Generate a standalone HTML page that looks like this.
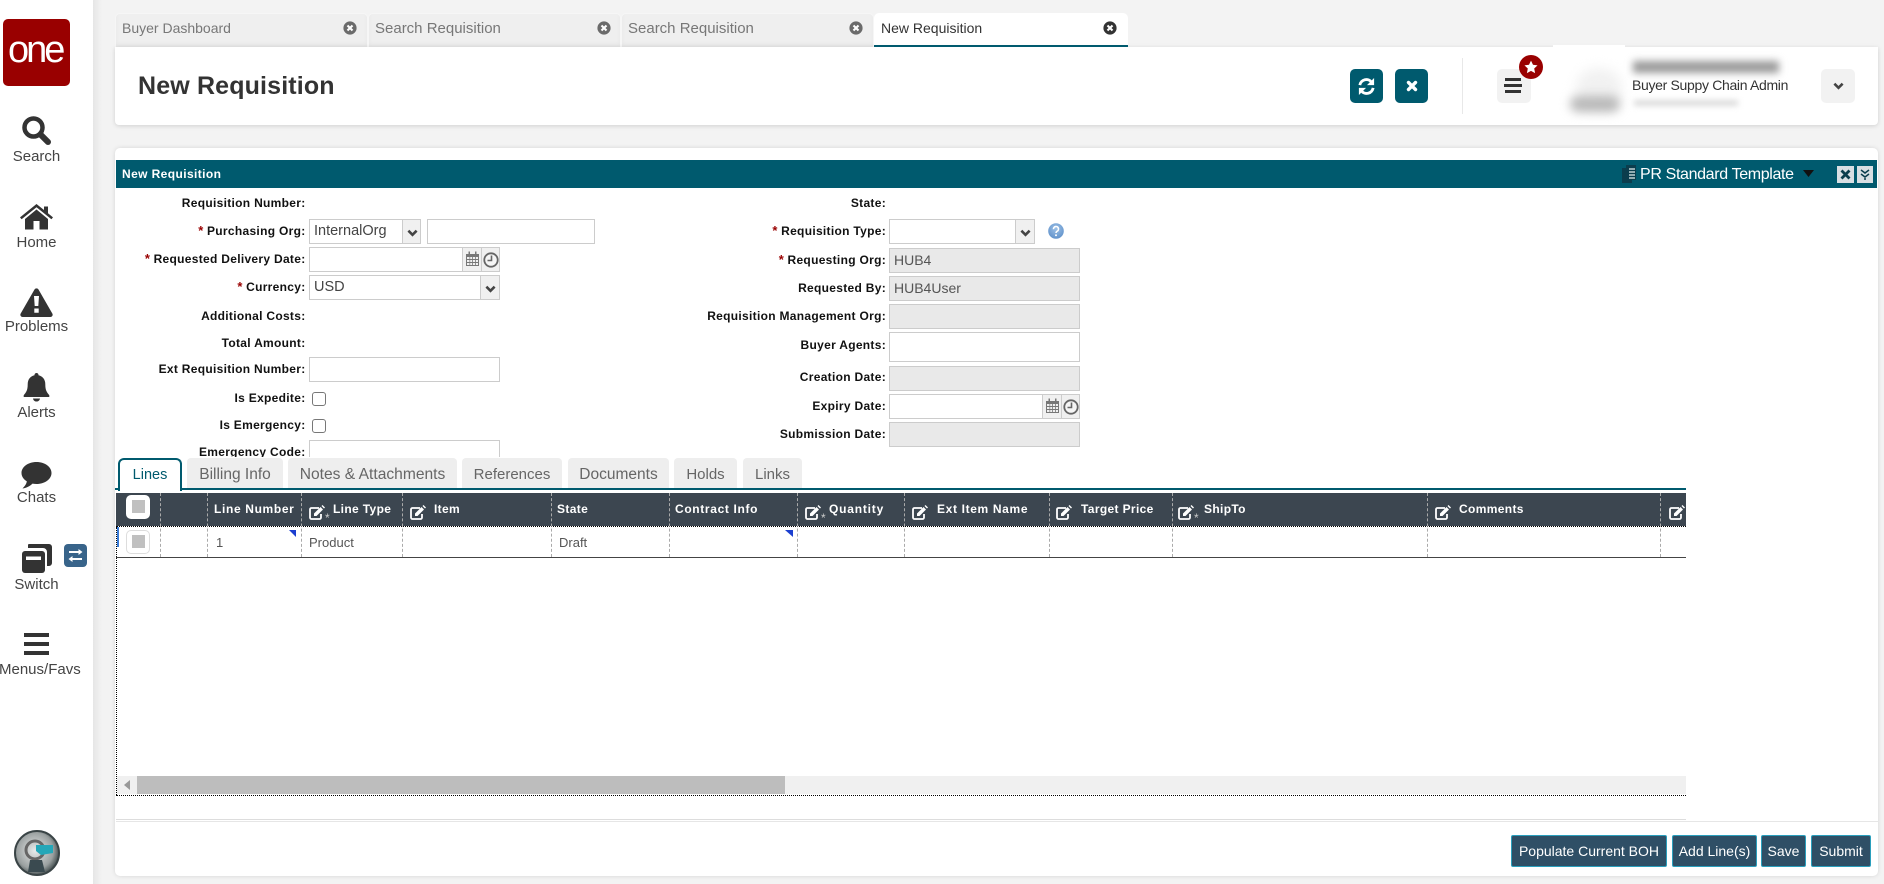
<!DOCTYPE html>
<html lang="en">
<head>
<meta charset="utf-8">
<title>New Requisition</title>
<style>
html,body{margin:0;padding:0;width:1884px;height:884px;overflow:hidden;background:#f3f3f3;font-family:"Liberation Sans",sans-serif}
div,span,svg{position:absolute;box-sizing:border-box}
.t{white-space:nowrap}
.side{left:0;width:73px;text-align:center;font-size:15px;line-height:18px;color:#444;white-space:nowrap}
.lab{font-weight:bold;font-size:12px;line-height:16px;color:#111;letter-spacing:.3px;text-align:right;white-space:nowrap}
.lc{left:100px;width:205.5px}
.rc{left:500px;width:386px}
.lab b{color:#900;font-size:13px;letter-spacing:0}
.b{background:#fff;border:1px solid #ccc}
.g{background:#e9e9e9;border:1px solid #ccc;font-size:14px;line-height:23px;color:#555;padding-left:4px}
.bt{background:#f0f0f0;border-left:1px solid #ccc;top:0;bottom:0}
.val{font-size:14.5px;line-height:23px;color:#444;left:4px;top:0}
.tab{top:13px;height:34px;background:#efefef;border:1px solid #f6f6f6;border-bottom:0;border-radius:5px 5px 0 0;box-shadow:0 -3px 4px rgba(0,0,0,.04) inset}
.tt{top:18px;font-size:14px;line-height:20px;color:#777;white-space:nowrap}
.ct{top:458px;height:30px;background:#eee;border-radius:4px 4px 0 0;font-size:15px;line-height:34px;color:#666;text-align:center;white-space:nowrap}
.hd{top:501px;font-weight:bold;font-size:12px;line-height:16px;color:#fff;letter-spacing:.35px;white-space:nowrap}
.sep{top:493px;height:64px;width:0;border-left:1px dashed #aaa}
.btn{top:835px;height:32px;background:#2f4f66;border:1px solid #2a9fbd;border-radius:2px;color:#fff;font-size:14px;line-height:30px;text-align:center;white-space:nowrap}
.rw{top:535px;font-size:13px;line-height:16px;color:#555;white-space:nowrap}
</style>
</head>
<body>
<svg width="0" height="0" style="left:0;top:0">
<defs>
<symbol id="chev" viewBox="0 0 12 8"><path d="M1.500 1.500 6 6l4.500-4.500" fill="none" stroke="#444" stroke-width="2.800"/></symbol>
<symbol id="cal" viewBox="0 0 15 15"><path fill="#777" d="M1 3h13v12H1z"/><path fill="#f0f0f0" d="M2 6h2.500v2H2zM5.200 6h2v2h-2zM8 6h2v2H8zM10.800 6H13v2h-2.200zM2 9h2.500v2H2zM5.200 9h2v2h-2zM8 9h2v2H8zM10.800 9H13v2h-2.200zM2 12h2.500v2H2zM5.200 12h2v2h-2zM8 12h2v2H8zM10.800 12H13v2h-2.200z"/><path fill="#777" d="M3.500 0.500h1.500v3.500H3.500zM10 0.500h1.500v3.500H10z"/></symbol>
<symbol id="clk" viewBox="0 0 16 16"><circle cx="8" cy="8" r="6.700" fill="#f5f5f5" stroke="#666" stroke-width="1.800"/><path d="M8.500 3.500V8.500H4.500" fill="none" stroke="#666" stroke-width="1.600"/></symbol>
<symbol id="ed" viewBox="0 0 16 15"><path d="M10 3H2.500A1.500 1.500 0 0 0 1 4.500v8A1.500 1.500 0 0 0 2.500 14h8a1.500 1.500 0 0 0 1.500-1.500V9" fill="none" stroke="#fff" stroke-width="1.800"/><path fill="#fff" d="M5 8.500 11.500 2l2.500 2.500L7.500 11H5zM12.500 1l1-1 2.500 2.500-1 1z"/></symbol>
<symbol id="cx" viewBox="0 0 14 14"><circle cx="7" cy="7" r="6.600" fill="currentColor"/><path d="M4.500 4.500l5 5M9.500 4.500l-5 5" stroke="#fff" stroke-width="2.100"/></symbol>
</defs>
</svg>

<!-- Sidebar -->
<div style="left:0;top:0;width:93px;height:884px;background:#fff"></div>
<div style="left:93px;top:0;width:9px;height:884px;background:linear-gradient(90deg,#e6e6e6,#f3f3f3)"></div>
<div style="left:3px;top:19px;width:67px;height:67px;background:#990000;border-radius:5px"></div>
<div class="t" style="left:8px;top:27px;font-size:38px;line-height:46px;color:#fff;letter-spacing:-3px">one</div>

<svg style="left:20px;top:115px" width="34" height="32" viewBox="0 0 34 32"><circle cx="13.500" cy="12.500" r="9" fill="none" stroke="#333" stroke-width="4.500"/><path d="M20.500 19.500 28 27" stroke="#333" stroke-width="6" stroke-linecap="round"/></svg>
<div class="side" style="top:148px">Search</div>

<svg style="left:20px;top:204px" width="33" height="26" viewBox="0 0 33 26"><path fill="#333" d="M16.500 0 24 6V2.500h4V9.300l5 4.100-1.600 1.900L16.500 3.200 1.600 15.300 0 13.400z"/><path fill="#333" d="M16.500 5.500 28 15v10.500h-8.500V17h-6v8.500H5V15z"/></svg>
<div class="side" style="top:234px">Home</div>

<svg style="left:20px;top:288px" width="33" height="29" viewBox="0 0 33 29"><path fill="#333" d="M14.500 1.500a2.300 2.300 0 0 1 4 0l13.800 24a2.300 2.300 0 0 1-2 3.500H2.700a2.300 2.300 0 0 1-2-3.500z"/><path fill="#fff" d="M14 8h5l-.7 10h-3.600zM14.300 20.500h4.400v4.200h-4.400z"/></svg>
<div class="side" style="top:318px">Problems</div>

<svg style="left:23px;top:373px" width="27" height="29" viewBox="0 0 27 29"><path fill="#333" d="M13.500 0a2 2 0 0 1 2 2.200c4.500 1 6.800 4.600 6.800 9 0 6 1.500 8 4 11v1.800H.7v-1.800c2.500-3 4-5 4-11 0-4.400 2.300-8 6.800-9A2 2 0 0 1 13.500 0z"/><path fill="#333" d="M10 25.500h7c-.4 2-1.800 3-3.500 3s-3.100-1-3.500-3z"/></svg>
<div class="side" style="top:404px">Alerts</div>

<svg style="left:21px;top:462px" width="31" height="27" viewBox="0 0 31 27"><path fill="#333" d="M15.500 0C24 0 30.500 4.900 30.500 11s-6.500 11-15 11c-1.400 0-2.700-.1-4-.4C9 24 5.500 26 1.500 26.500 4 24 5.500 22 5.800 19.300 2.400 17.300.5 14.300.5 11 .5 4.900 7 0 15.500 0z"/></svg>
<div class="side" style="top:489px">Chats</div>

<svg style="left:21px;top:544px" width="31" height="29" viewBox="0 0 31 29"><path fill="#333" d="M8 0h20a3 3 0 0 1 3 3v16a3 3 0 0 1-3 3h-2V8a4 4 0 0 0-4-4H7V1a1 1 0 0 1 1-1z"/><rect x="1" y="7" width="23" height="22" rx="3" fill="#333"/><rect x="5" y="12.500" width="15" height="3.500" fill="#fff"/></svg>
<div class="side" style="top:576px">Switch</div>
<div style="left:64px;top:544px;width:23px;height:23px;background:#38648a;border-radius:4px"></div>
<svg style="left:68px;top:549px" width="15" height="13" viewBox="0 0 15 13"><path fill="#fff" d="M10.500 0 14.500 3 10.500 6V4H1V2h9.500zM4.500 7v2H14v2H4.500v2L.5 10z"/></svg>

<div style="left:24px;top:633px;width:25px;height:4px;background:#333"></div>
<div style="left:24px;top:642px;width:25px;height:4px;background:#333"></div>
<div style="left:24px;top:651px;width:25px;height:4px;background:#333"></div>
<div class="side" style="top:661px;left:-1px;width:78px">Menus/Favs</div>

<svg style="left:14px;top:830px" width="46" height="46" viewBox="0 0 46 46"><defs><radialGradient id="av" cx=".45" cy=".45" r=".6"><stop offset="0" stop-color="#e8eaea"/><stop offset=".7" stop-color="#9aa0a0"/><stop offset="1" stop-color="#2f3a3c"/></radialGradient></defs><circle cx="23" cy="23" r="22" fill="url(#av)" stroke="#3a4446" stroke-width="2"/><circle cx="21" cy="20" r="9" fill="none" stroke="#666" stroke-width="3"/><path fill="#25a7b8" d="M22 15h17v8l-12 2-5-4z"/><path fill="#3a4a50" d="M16 30h12l3 12H14z"/></svg>

<!-- Browser tabs -->
<div class="tab" style="left:115px;width:253px"></div>
<div class="tab" style="left:368px;width:253px"></div>
<div class="tab" style="left:621px;width:253px"></div>
<div class="tab" style="left:874px;width:254px;background:#fff;border:0;box-shadow:none"></div>
<div class="tt" style="left:122px">Buyer Dashboard</div>
<div class="tt" style="left:375px;top:19px;font-size:15px">Search Requisition</div>
<div class="tt" style="left:628px;top:19px;font-size:15px">Search Requisition</div>
<div class="tt" style="left:881px;color:#333">New Requisition</div>
<svg style="left:343px;top:21px;color:#6b6b6b" width="14" height="14"><use href="#cx"/></svg>
<svg style="left:597px;top:21px;color:#6b6b6b" width="14" height="14"><use href="#cx"/></svg>
<svg style="left:849px;top:21px;color:#6b6b6b" width="14" height="14"><use href="#cx"/></svg>
<svg style="left:1103px;top:21px;color:#333" width="14" height="14"><use href="#cx"/></svg>

<!-- Header panel -->
<div style="left:115px;top:47px;width:1763px;height:78px;background:#fff;border-radius:0 0 4px 4px;box-shadow:0 1px 5px rgba(0,0,0,.14)"></div>
<div style="left:1553px;top:45px;width:72px;height:3px;background:#fff"></div>
<div style="left:874px;top:45px;width:254px;height:2px;background:#005a6e"></div>
<div class="t" style="left:138px;top:70px;font-size:25px;line-height:32px;font-weight:bold;color:#333;letter-spacing:.15px">New Requisition</div>

<div style="left:1350px;top:69px;width:33px;height:34px;background:#005a6e;border-radius:5px"></div>
<svg style="left:1357px;top:77px" width="19" height="19" viewBox="0 0 20 20"><path d="M3 8.500A7 7 0 0 1 15.500 5.500" fill="none" stroke="#fff" stroke-width="3"/><path fill="#fff" d="M18 1v7.500H10.500z"/><path d="M17 11.500A7 7 0 0 1 4.500 14.500" fill="none" stroke="#fff" stroke-width="3"/><path fill="#fff" d="M2 19v-7.500H9.500z"/></svg>
<div style="left:1395px;top:69px;width:33px;height:34px;background:#005a6e;border-radius:5px"></div>
<svg style="left:1405px;top:79px" width="14" height="14" viewBox="0 0 14 14"><path d="M3.500 3.500l7 7M10.500 3.500l-7 7" stroke="#fff" stroke-width="3.400" stroke-linecap="round"/></svg>
<div style="left:1462px;top:58px;width:1px;height:56px;background:#e8e8e8"></div>
<div style="left:1497px;top:69px;width:34px;height:34px;background:#f2f2f2;border-radius:5px"></div>
<div style="left:1505px;top:78px;width:16px;height:3px;background:#333"></div>
<div style="left:1504px;top:84px;width:18px;height:3px;background:#333"></div>
<div style="left:1505px;top:90px;width:16px;height:3px;background:#333"></div>
<div style="left:1519px;top:55px;width:24px;height:24px;background:#990000;border-radius:50%"></div>
<svg style="left:1524px;top:60px" width="14" height="14" viewBox="0 0 24 24"><path fill="#fff" d="M12 1l3.400 7.200 7.800 1-5.700 5.400 1.500 7.800L12 18.600l-7 3.800 1.500-7.800L.8 9.200l7.800-1z"/></svg>

<div style="left:1576px;top:68px;width:46px;height:40px;border-radius:50%;background:#f1f1f1;filter:blur(6px)"></div>
<div style="left:1570px;top:96px;width:50px;height:16px;background:#b9b9b9;border-radius:8px;filter:blur(5px)"></div>
<div style="left:1633px;top:61px;width:146px;height:12px;background:#9a9a9a;filter:blur(4px)"></div>
<div class="t" style="left:1632px;top:76px;font-size:14px;line-height:18px;color:#333;letter-spacing:-.32px">Buyer Suppy Chain Admin</div>
<div style="left:1634px;top:100px;width:104px;height:6px;background:#dcdcdc;filter:blur(3px)"></div>
<div style="left:1821px;top:69px;width:34px;height:34px;background:#f2f2f2;border-radius:5px"></div>
<svg style="left:1833px;top:82px" width="11" height="8"><use href="#chev"/></svg>

<!-- Main panel -->
<div style="left:115px;top:148px;width:1763px;height:728px;background:#fff;border-radius:5px;box-shadow:0 0 5px rgba(0,0,0,.12)"></div>
<div style="left:116px;top:160px;width:1761px;height:28px;background:#005a6e"></div>
<div class="t" style="left:122px;top:166px;font-size:12px;line-height:16px;font-weight:bold;color:#fff;letter-spacing:.4px">New Requisition</div>
<svg style="left:1621px;top:165px" width="16" height="19" viewBox="0 0 16 19"><path fill="#0b3d4d" d="M1 3h10v15H1z"/><path fill="#0b3d4d" d="M5 0h10v15H5z"/><path d="M8 4h6M8 7h6M8 10h6M8 13h6" stroke="#e4eef0" stroke-width="1.300"/></svg>
<div class="t" style="left:1640px;top:165px;font-size:16px;line-height:20px;color:#fff;letter-spacing:-.35px">PR Standard Template</div>
<svg style="left:1803px;top:170px" width="11" height="7"><path d="M0 0h11L5.500 7z" fill="#111"/></svg>
<div style="left:1837px;top:166px;width:17px;height:17px;background:#d8dfe3"></div>
<svg style="left:1840px;top:169px" width="11" height="11" viewBox="0 0 11 11"><path d="M1.500 1.500l8 8M9.500 1.500l-8 8" stroke="#0b3d4d" stroke-width="2.800"/></svg>
<div style="left:1857px;top:166px;width:16px;height:17px;background:#d8dfe3"></div>
<svg style="left:1860px;top:169px" width="10" height="12" viewBox="0 0 10 12"><path d="M1 1l4 3 4-3M1 5l4 3 4-3" fill="none" stroke="#0b3d4d" stroke-width="1.500"/><path d="M5 9v2" stroke="#0b3d4d" stroke-width="1.500"/></svg>

<!-- Left form -->
<div class="lab lc" style="top:195px">Requisition Number:</div>
<div class="lab lc" style="top:223px"><b>*</b> Purchasing Org:</div>
<div class="b" style="left:309px;top:219px;width:112px;height:25px"><span class="val">InternalOrg</span><div class="bt" style="left:92px;right:0"><svg style="left:4px;top:9px" width="11" height="8"><use href="#chev"/></svg></div></div>
<div class="b" style="left:427px;top:219px;width:168px;height:25px"></div>
<div class="lab lc" style="top:251px"><b>*</b> Requested Delivery Date:</div>
<div class="b" style="left:309px;top:247px;width:191px;height:25px"><div class="bt" style="left:152px;width:19px"><svg style="left:2px;top:3px" width="15" height="15"><use href="#cal"/></svg></div><div class="bt" style="left:171px;right:0"><svg style="left:1px;top:4px" width="16" height="16"><use href="#clk"/></svg></div></div>
<div class="lab lc" style="top:279px"><b>*</b> Currency:</div>
<div class="b" style="left:309px;top:275px;width:191px;height:25px"><span class="val">USD</span><div class="bt" style="left:170px;right:0"><svg style="left:4px;top:9px" width="11" height="8"><use href="#chev"/></svg></div></div>
<div class="lab lc" style="top:308px">Additional Costs:</div>
<div class="lab lc" style="top:335px">Total Amount:</div>
<div class="lab lc" style="top:361px">Ext Requisition Number:</div>
<div class="b" style="left:309px;top:357px;width:191px;height:25px"></div>
<div class="lab lc" style="top:390px">Is Expedite:</div>
<div style="left:312px;top:392px;width:14px;height:14px;background:#fff;border:1.500px solid #777;border-radius:3px"></div>
<div class="lab lc" style="top:417px">Is Emergency:</div>
<div style="left:312px;top:419px;width:14px;height:14px;background:#fff;border:1.500px solid #777;border-radius:3px"></div>
<div class="lab lc" style="top:444px">Emergency Code:</div>
<div class="b" style="left:309px;top:440px;width:191px;height:25px"></div>

<!-- Right form -->
<div class="lab rc" style="top:195px">State:</div>
<div class="lab rc" style="top:223px"><b>*</b> Requisition Type:</div>
<div class="b" style="left:889px;top:219px;width:146px;height:25px"><div class="bt" style="left:125px;right:0"><svg style="left:4px;top:9px" width="11" height="8"><use href="#chev"/></svg></div></div>
<svg style="left:1048px;top:223px" width="16" height="16" viewBox="0 0 16 16"><defs><radialGradient id="hp" cx=".5" cy=".35" r=".7"><stop offset="0" stop-color="#9cc0e6"/><stop offset="1" stop-color="#5d8fc9"/></radialGradient></defs><circle cx="8" cy="8" r="7.800" fill="url(#hp)"/><path d="M5.500 6.200A2.500 2.500 0 1 1 9 8.300C8.300 8.700 8 9 8 10" fill="none" stroke="#fff" stroke-width="1.600"/><circle cx="8" cy="12.200" r="1" fill="#fff"/></svg>
<div class="lab rc" style="top:252px"><b>*</b> Requesting Org:</div>
<div class="g" style="left:889px;top:248px;width:191px;height:25px">HUB4</div>
<div class="lab rc" style="top:280px">Requested By:</div>
<div class="g" style="left:889px;top:276px;width:191px;height:25px">HUB4User</div>
<div class="lab rc" style="top:308px">Requisition Management Org:</div>
<div class="g" style="left:889px;top:304px;width:191px;height:25px"></div>
<div class="lab rc" style="top:337px">Buyer Agents:</div>
<div class="b" style="left:889px;top:332px;width:191px;height:30px"></div>
<div class="lab rc" style="top:369px">Creation Date:</div>
<div class="g" style="left:889px;top:366px;width:191px;height:25px"></div>
<div class="lab rc" style="top:398px">Expiry Date:</div>
<div class="b" style="left:889px;top:394px;width:191px;height:25px"><div class="bt" style="left:152px;width:19px"><svg style="left:2px;top:3px" width="15" height="15"><use href="#cal"/></svg></div><div class="bt" style="left:171px;right:0"><svg style="left:1px;top:4px" width="16" height="16"><use href="#clk"/></svg></div></div>
<div class="lab rc" style="top:426px">Submission Date:</div>
<div class="g" style="left:889px;top:422px;width:191px;height:25px"></div>

<!-- Content tabs -->
<div style="left:116px;top:457px;width:600px;height:36px;background:#fff"></div>
<div class="ct" style="left:187px;width:96px;font-size:15.5px">Billing Info</div>
<div class="ct" style="left:288px;width:169px;font-size:15.6px">Notes &amp; Attachments</div>
<div class="ct" style="left:462px;width:100px">References</div>
<div class="ct" style="left:568px;width:101px;font-size:15.5px">Documents</div>
<div class="ct" style="left:674px;width:63px">Holds</div>
<div class="ct" style="left:743px;width:59px">Links</div>
<div style="left:115px;top:488px;width:1571px;height:2px;background:#005a6e"></div>
<div style="left:118px;top:458px;width:64px;height:33px;background:#fff;border:2px solid #005a6e;border-bottom:0;border-radius:6px 6px 0 0;color:#005a6e;font-size:14.5px;line-height:30px;text-align:center">Lines</div>

<!-- Grid -->
<div style="left:116px;top:493px;width:1570px;height:33px;background:#3c4650"></div>
<div style="left:116px;top:526px;width:1570px;height:1px;border-top:1px dotted #000"></div>
<div style="left:116px;top:557px;width:1570px;height:1px;background:#444"></div>
<div style="left:116px;top:527px;width:0;height:268px;border-left:1px dotted #000"></div>
<div style="left:117px;top:527px;width:2px;height:20px;background:#3b7dd8"></div>

<div class="sep" style="left:160px"></div>
<div class="sep" style="left:207px"></div>
<div class="sep" style="left:301px"></div>
<div class="sep" style="left:402px"></div>
<div class="sep" style="left:551px"></div>
<div class="sep" style="left:669px"></div>
<div class="sep" style="left:797px"></div>
<div class="sep" style="left:904px"></div>
<div class="sep" style="left:1049px"></div>
<div class="sep" style="left:1172px"></div>
<div class="sep" style="left:1427px"></div>
<div class="sep" style="left:1660px"></div>

<div style="left:126px;top:495px;width:24px;height:24px;background:#fff;border-radius:5px"></div>
<div style="left:132px;top:500px;width:13px;height:13px;background:#c0c0c0"></div>
<div style="left:126px;top:530px;width:24px;height:24px;background:#fff;border:1.500px solid #ddd;border-radius:5px"></div>
<div style="left:132px;top:535px;width:13px;height:13px;background:#c0c0c0"></div>

<div class="hd" style="left:214px;letter-spacing:.65px">Line Number</div>
<div class="hd" style="left:333px">Line Type</div>
<div class="hd" style="left:434px">Item</div>
<div class="hd" style="left:557px">State</div>
<div class="hd" style="left:675px;letter-spacing:.65px">Contract Info</div>
<div class="hd" style="left:829px;letter-spacing:.8px">Quantity</div>
<div class="hd" style="left:937px;letter-spacing:.65px">Ext Item Name</div>
<div class="hd" style="left:1081px">Target Price</div>
<div class="hd" style="left:1204px">ShipTo</div>
<div class="hd" style="left:1459px">Comments</div>

<svg style="left:309px;top:505px" width="16" height="15"><use href="#ed"/></svg>
<svg style="left:410px;top:505px" width="16" height="15"><use href="#ed"/></svg>
<svg style="left:805px;top:505px" width="16" height="15"><use href="#ed"/></svg>
<svg style="left:912px;top:505px" width="16" height="15"><use href="#ed"/></svg>
<svg style="left:1056px;top:505px" width="16" height="15"><use href="#ed"/></svg>
<svg style="left:1178px;top:505px" width="16" height="15"><use href="#ed"/></svg>
<svg style="left:1435px;top:505px" width="16" height="15"><use href="#ed"/></svg>
<svg style="left:1669px;top:505px" width="16" height="15"><use href="#ed"/></svg>
<div class="t" style="left:325px;top:513px;font-size:12px;line-height:10px;color:#ccc">*</div>
<div class="t" style="left:821px;top:513px;font-size:12px;line-height:10px;color:#ccc">*</div>
<div class="t" style="left:1194px;top:513px;font-size:12px;line-height:10px;color:#ccc">*</div>

<div class="rw" style="left:216px">1</div>
<div class="rw" style="left:309px">Product</div>
<div class="rw" style="left:559px">Draft</div>
<svg style="left:289px;top:530px" width="7" height="7"><path d="M0 0h7v7z" fill="#1c3fd0"/></svg>
<svg style="left:785px;top:530px" width="8" height="7"><path d="M0 0h8v7z" fill="#1c3fd0"/></svg>

<!-- Scrollbar -->
<div style="left:117px;top:776px;width:1569px;height:18px;background:#f0f0f0"></div>
<svg style="left:123px;top:780px" width="8" height="10"><path d="M7 0v10L1 5z" fill="#999"/></svg>
<div style="left:137px;top:776px;width:648px;height:18px;background:#bdbdbd"></div>
<div style="left:116px;top:795px;width:1570px;height:1px;border-top:1px dotted #000"></div>
<div style="left:116px;top:819px;width:1570px;height:1px;background:#ddd"></div>
<div style="left:116px;top:821px;width:1762px;height:1px;background:#e6e6e6"></div>

<!-- Buttons -->
<div class="btn" style="left:1511px;width:156px">Populate Current BOH</div>
<div class="btn" style="left:1672px;width:85px">Add Line(s)</div>
<div class="btn" style="left:1761px;width:45px">Save</div>
<div class="btn" style="left:1811px;width:60px">Submit</div>
</body>
</html>
